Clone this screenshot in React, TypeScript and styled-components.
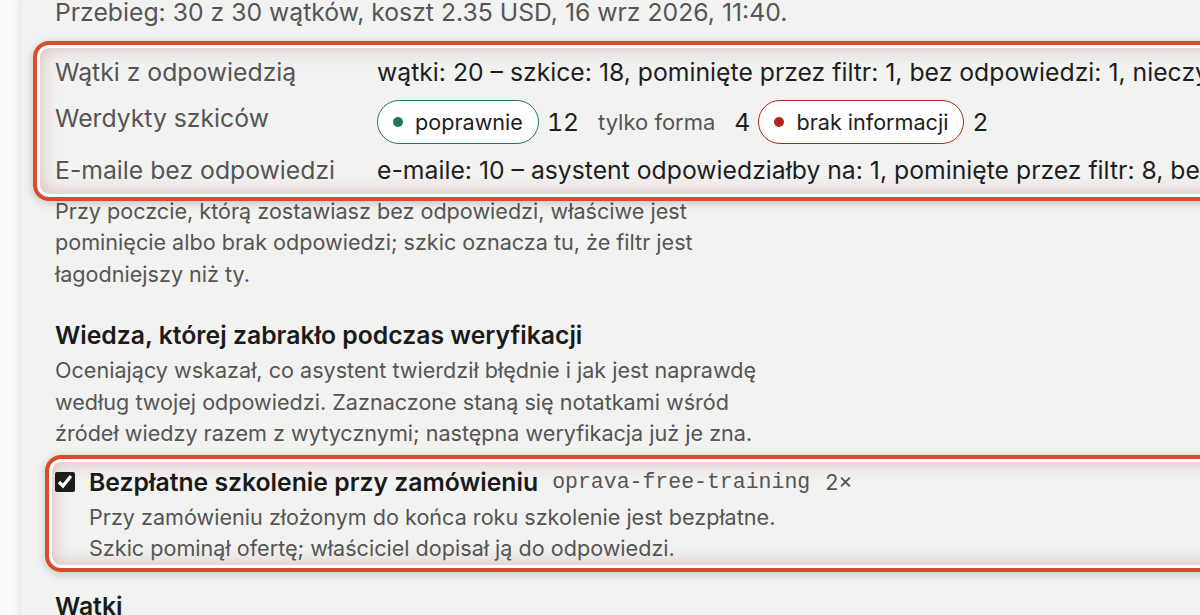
import React, { FC } from "react";
import styled, { createGlobalStyle } from "styled-components";

const GlobalStyle = createGlobalStyle`
  html, body {
    margin: 0;
    padding: 0;
    background: #fafafa;
    overflow: hidden;
  }
  body {
    font-family: Inter, "Noto Sans", sans-serif;
    color: #1c1c1c;
  }
`;

const Panel = styled.main`
  margin-left: 20px;
  min-height: 615px;
  padding: 0 0 0 34px;
  background: #f2f2f1;
  border-left: 1px solid #e6e6e6;
  box-shadow: -2px 0 8px rgba(0, 0, 0, 0.08);
  overflow: hidden;
`;

const Summary = styled.p`
  margin: -3px 0 0;
  font-size: 24.75px;
  line-height: 31.5px;
  color: #555;
  white-space: nowrap;
`;

const Highlight = styled.section<{ $shift: number; $pad: string; $top: number }>`
  position: relative;
  width: 1300px;
  margin: ${(p) => p.$top}px 0 0 ${(p) => -p.$shift}px;
  padding: ${(p) => p.$pad};
  border: 4px solid #dc4a2c;
  border-radius: 16px;
  box-shadow:
    0 2px 10px rgba(0, 0, 0, 0.2),
    inset 0 0 0 3px #ffffff,
    inset 0 0 16px 5px rgba(150, 70, 55, 0.28);
`;

const StatRow = styled.div<{ $height: number }>`
  display: grid;
  grid-template-columns: 322px 1fr;
  height: ${(p) => p.$height}px;
`;

const StatLabel = styled.div<{ $top?: number }>`
  padding-top: ${(p) => p.$top ?? 8}px;
  font-size: 24.75px;
  line-height: 32px;
  color: #555;
  white-space: nowrap;
`;

const StatValue = styled.div`
  padding-top: 8px;
  font-size: 24.75px;
  line-height: 32px;
  color: #1e1e1e;
  white-space: nowrap;
`;

const Verdicts = styled.div`
  display: flex;
  align-items: center;
  gap: 8px;
  padding-top: 4px;
  height: 44px;
`;

const Verdict = styled.span<{ $tone?: string }>`
  display: inline-flex;
  align-items: center;
  gap: 12px;
  height: 44px;
  box-sizing: border-box;
  padding: ${(p) => (p.$tone ? "0 15px" : "0 10px")};
  border: 1.5px solid ${(p) => p.$tone ?? "transparent"};
  border-radius: 22px;
  background: ${(p) => (p.$tone ? "#ffffff" : "transparent")};
  font-size: ${(p) => (p.$tone ? "21.6px" : "22px")};
  color: ${(p) => (p.$tone ? "#1e1e1e" : "#555")};
  white-space: nowrap;
`;

const Dot = styled.span<{ $tone: string }>`
  width: 10px;
  height: 10px;
  border-radius: 50%;
  background: ${(p) => p.$tone};
`;

const Count = styled.span`
  font-size: 24.75px;
  font-variant-numeric: tabular-nums;
  color: #1e1e1e;
`;

const Note = styled.p<{ $top: number }>`
  max-width: 715px;
  margin: ${(p) => p.$top}px 0 0;
  font-size: 21.6px;
  line-height: 31.5px;
  color: #555;
`;

const Heading = styled.h2<{ $top: number }>`
  margin: ${(p) => p.$top}px 0 0;
  font-size: 24.75px;
  font-weight: 600;
  line-height: 30px;
  color: #1a1a1a;
`;

const FactHead = styled.label`
  display: flex;
  align-items: center;
  height: 32px;
  white-space: nowrap;
`;

const Check = styled.input`
  width: 20px;
  height: 20px;
  margin: 0 14px 0 0;
  accent-color: #1c1c1c;
`;

const FactTitle = styled.span`
  font-size: 24.75px;
  font-weight: 600;
  color: #1a1a1a;
`;

const FactKey = styled.code`
  margin-left: 14px;
  font-family: "Liberation Mono", "DejaVu Sans Mono", monospace;
  font-size: 21.5px;
  color: #555;
`;

const FactHits = styled.span`
  margin-left: 15px;
  font-size: 21.6px;
  color: #555;
`;

const FactText = styled.div`
  margin-top: 4.5px;
  padding-left: 34px;
  font-size: 21.6px;
  line-height: 31px;
  color: #555;
  white-space: nowrap;
`;

const GREEN = "#1f7a52";
const RED = "#b3261e";

const App: FC = () => {
  return (
    <>
      <GlobalStyle />
      <Panel>
        <Summary>Przebieg: 30 z 30 wątków, koszt 2.35 USD, 16 wrz 2026, 11:40.</Summary>

        <Highlight $shift={22} $pad="3px 0 3px 18px" $top={12}>
          <StatRow $height={48}>
            <StatLabel>Wątki z odpowiedzią</StatLabel>
            <StatValue>
              wątki: 20 – szkice: 18, pominięte przez filtr: 1, bez odpowiedzi: 1, nieczytelne: 0
            </StatValue>
          </StatRow>
          <StatRow $height={50}>
            <StatLabel $top={6}>Werdykty szkiców</StatLabel>
            <Verdicts>
              <Verdict $tone={GREEN}>
                <Dot $tone={GREEN} />
                poprawnie
              </Verdict>
              <Count>12</Count>
              <Verdict>tylko forma</Verdict>
              <Count>4</Count>
              <Verdict $tone={RED}>
                <Dot $tone={RED} />
                brak informacji
              </Verdict>
              <Count>2</Count>
            </Verdicts>
          </StatRow>
          <StatRow $height={48}>
            <StatLabel>E-maile bez odpowiedzi</StatLabel>
            <StatValue>
              e-maile: 10 – asystent odpowiedziałby na: 1, pominięte przez filtr: 8, bez odpowiedzi: 1
            </StatValue>
          </StatRow>
        </Highlight>

        <Note $top={-4.75}>
          Przy poczcie, którą zostawiasz bez odpowiedzi, właściwe jest pominięcie albo brak
          odpowiedzi; szkic oznacza tu, że filtr jest łagodniejszy niż ty.
        </Note>

        <Heading $top={30}>Wiedza, której zabrakło podczas weryfikacji</Heading>
        <Note $top={5}>
          Oceniający wskazał, co asystent twierdził błędnie i jak jest naprawdę według twojej
          odpowiedzi. Zaznaczone staną się notatkami wśród źródeł wiedzy razem z wytycznymi;
          następna weryfikacja już je zna.
        </Note>

        <Highlight $shift={10} $pad="7px 0 4px 6px" $top={5}>
          <FactHead>
            <Check type="checkbox" defaultChecked />
            <FactTitle>Bezpłatne szkolenie przy zamówieniu</FactTitle>
            <FactKey>oprava-free-training</FactKey>
            <FactHits>2×</FactHits>
          </FactHead>
          <FactText>
            Przy zamówieniu złożonym do końca roku szkolenie jest bezpłatne.
            <br />
            Szkic pominął ofertę; właściciel dopisał ją do odpowiedzi.
          </FactText>
        </Highlight>

        <Heading $top={19}>Wątki</Heading>
      </Panel>
    </>
  );
};

export default App;
